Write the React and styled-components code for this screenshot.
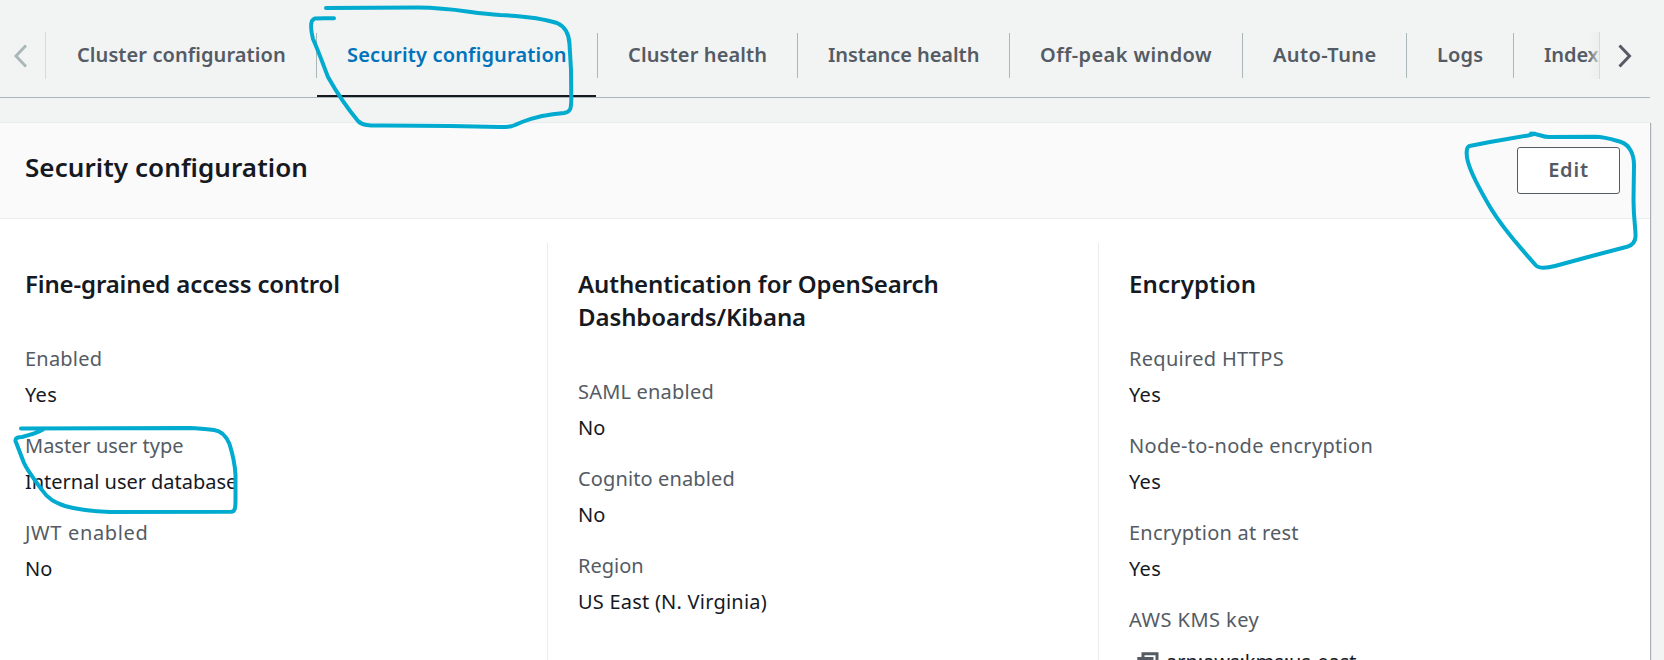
import React from "react";
import styled, { createGlobalStyle, css } from "styled-components";

const GlobalStyle = createGlobalStyle`
  * { box-sizing: border-box; }
  body {
    margin: 0;
    background: #f2f3f3;
    color: #16191f;
    font-family: "Noto Sans", "Open Sans", sans-serif;
    font-size: 20px;
  }
`;

const Page = styled.main`
  position: relative;
  display: flex;
  flex-direction: column;
  gap: 24px;
  width: 1664px;
  height: 660px;
  padding-right: 14px;
  overflow: hidden;
`;

const TabBar = styled.nav`
  display: flex;
  flex: none;
  height: 98px;
  border-bottom: 1px solid #aab7b8;
`;

const ScrollButton = styled.button`
  position: relative;
  flex: none;
  display: flex;
  align-items: center;
  height: 47px;
  margin: 32px 0 0;
  padding: 0;
  border: 0 solid #d5dbdb;
  background: #f2f3f3;
  ${(p) =>
    p.$side === "left"
      ? css`
          width: 46px;
          padding-left: 13px;
          border-right-width: 1px;
          color: #aab7b8;
        `
      : css`
          width: 51px;
          padding-left: 18px;
          border-left-width: 1px;
          color: #545b64;
          &::before {
            content: "";
            position: absolute;
            top: 0;
            bottom: 0;
            left: -12px;
            width: 11px;
            background: linear-gradient(to right, rgba(242, 243, 243, 0), rgba(236, 238, 238, 0.8));
          }
        `}
`;

const TabList = styled.div`
  display: flex;
  flex: 1;
  min-width: 0;
  overflow: hidden;
`;

const Tab = styled.div`
  flex: none;
  width: ${(p) => p.$width}px;
  padding-top: 33px;
  color: ${(p) => (p.$active ? "#0073bb" : "#545b64")};
  ${(p) =>
    p.$active &&
    css`
      background: linear-gradient(#16191f, #16191f) 1px 95px / 279px 2px no-repeat;
    `}
`;

const TabLabel = styled.div`
  height: 45px;
  padding-left: 30px;
  border-left: 1px solid ${(p) => (p.$first ? "transparent" : "#aab7b8")};
  font-weight: 600;
  line-height: 43px;
  letter-spacing: ${(p) => p.$tracking}px;
  white-space: nowrap;
`;

const Panel = styled.section`
  flex: 1;
  display: flex;
  flex-direction: column;
  margin-bottom: -10px;
  border-top: 1px solid #eaeded;
  background: #fff;
  box-shadow: 1px 1px 1px 0 rgba(0, 28, 36, 0.3);
`;

const PanelHeader = styled.header`
  display: flex;
  justify-content: space-between;
  align-items: flex-start;
  height: 96px;
  padding: 24px 30px 0 25px;
  border-bottom: 1px solid #eaeded;
  background: #fafafa;
`;

const PanelTitle = styled.h2`
  margin: 2px 0 0;
  font-size: 26px;
  font-weight: 600;
  line-height: 36px;
  letter-spacing: 0.07px;
`;

const EditButton = styled.button`
  width: 103px;
  height: 47px;
  padding: 0 0 1px;
  border: 1px solid #545b64;
  border-radius: 3px;
  background: #fff;
  color: #545b64;
  font: 600 20px/44px "Noto Sans", "Open Sans", sans-serif;
  letter-spacing: 0.8px;
`;

const Columns = styled.div`
  display: grid;
  grid-template-columns: 547px 551px 1fr;
  flex: 1;
  padding-top: 24px;
`;

const Column = styled.div`
  padding: 24px 24px 0 ${(p) => (p.$divided ? 30 : 25)}px;
  border-left: ${(p) => (p.$divided ? "1px solid #eaeded" : "0")};
`;

const ColumnTitle = styled.h3`
  margin: 0 0 41px;
  font-size: 24px;
  font-weight: 600;
  line-height: 33px;
  letter-spacing: ${(p) => p.$tracking}px;
  white-space: pre-line;
`;

const Field = styled.div`
  margin-bottom: 15px;
  line-height: 36px;
  white-space: nowrap;
`;

const FieldLabel = styled.div`
  color: #545b64;
  letter-spacing: ${(p) => p.$tracking}px;
`;

const FieldValue = styled.div`
  letter-spacing: ${(p) => p.$tracking}px;
`;

const KeyValue = styled.div`
  display: flex;
  align-items: flex-start;
  gap: 7px;
  padding: 6px 0 0 8px;

  svg {
    margin-top: 8px;
  }
`;

const Annotations = styled.svg`
  position: absolute;
  inset: 0;
  pointer-events: none;
`;

const tabs = [
  { label: "Cluster configuration", width: 270, tracking: 0.08 },
  { label: "Security configuration", width: 281, tracking: 0.15, active: true },
  { label: "Cluster health", width: 200, tracking: 0.13 },
  { label: "Instance health", width: 212, tracking: -0.06 },
  { label: "Off-peak window", width: 233, tracking: 0.4 },
  { label: "Auto-Tune", width: 164, tracking: 0.42 },
  { label: "Logs", width: 107, tracking: 0.15 },
  { label: "Indexes", width: 140, tracking: -0.1 },
];

const columns = [
  {
    title: "Fine-grained access control",
    tracking: -0.14,
    fields: [
      ["Enabled", 0.2, "Yes", 0.3],
      ["Master user type", 0, "Internal user database", -0.03],
      ["JWT enabled", 0.65, "No", 0],
    ],
  },
  {
    title: "Authentication for OpenSearch\nDashboards/Kibana",
    tracking: -0.1,
    fields: [
      ["SAML enabled", 0.2, "No", 0],
      ["Cognito enabled", 0.13, "No", 0],
      ["Region", 0, "US East (N. Virginia)", 0.22],
    ],
  },
  {
    title: "Encryption",
    tracking: 0.12,
    fields: [
      ["Required HTTPS", 0.3, "Yes", 0.3],
      ["Node-to-node encryption", 0.3, "Yes", 0.3],
      ["Encryption at rest", 0.24, "Yes", 0.3],
    ],
    keyLabel: "AWS KMS key",
    keyValue: "arn:aws:kms:us-east",
  },
];

function Chevron({ direction }) {
  return (
    <svg width="14" height="24" viewBox="0 0 14 24" fill="none" stroke="currentColor" strokeWidth="3">
      <path d={direction === "left" ? "M13 1.5 L3 12 L13 22.5" : "M1.5 1.5 L11.5 12 L1.5 22.5"} />
    </svg>
  );
}

function CopyIcon() {
  return (
    <svg width="22" height="22" viewBox="0 0 22 22" fill="none" stroke="#545b64" strokeWidth="3">
      <path d="M6 6 V1.8 H20 V16 H16" />
      <path d="M1.8 6.5 H15 V20.4 H1.8 Z" />
    </svg>
  );
}

export default function App() {
  return (
    <Page>
      <GlobalStyle />
      <TabBar>
        <ScrollButton $side="left" aria-label="Previous tabs">
          <Chevron direction="left" />
        </ScrollButton>
        <TabList>
          {tabs.map((tab, i) => (
            <Tab key={tab.label} $width={tab.width} $active={tab.active}>
              <TabLabel $first={i === 0} $tracking={tab.tracking}>{tab.label}</TabLabel>
            </Tab>
          ))}
        </TabList>
        <ScrollButton $side="right" aria-label="Next tabs">
          <Chevron direction="right" />
        </ScrollButton>
      </TabBar>

      <Panel>
        <PanelHeader>
          <PanelTitle>Security configuration</PanelTitle>
          <EditButton>Edit</EditButton>
        </PanelHeader>
        <Columns>
          {columns.map((column, i) => (
            <Column key={column.title} $divided={i > 0}>
              <ColumnTitle $tracking={column.tracking}>{column.title}</ColumnTitle>
              {column.fields.map(([label, labelTracking, value, valueTracking]) => (
                <Field key={label}>
                  <FieldLabel $tracking={labelTracking}>{label}</FieldLabel>
                  <FieldValue $tracking={valueTracking}>{value}</FieldValue>
                </Field>
              ))}
              {column.keyLabel && (
                <Field>
                  <FieldLabel $tracking={0.45}>{column.keyLabel}</FieldLabel>
                  <KeyValue>
                    <CopyIcon />
                    <FieldValue $tracking={-0.03}>{column.keyValue}</FieldValue>
                  </KeyValue>
                </Field>
              )}
            </Column>
          ))}
        </Columns>
      </Panel>

      <Annotations
        width="1664"
        height="660"
        viewBox="0 0 1664 660"
        fill="none"
        stroke="#00abcf"
        strokeWidth="4"
        strokeLinecap="round"
        strokeLinejoin="round"
      >
        <path d="M326 8 L418 7.6 C455 8 470 13 500 15 C525 16 545 19 557 23 C566 27 569 34 569.5 44 L571 70 L571.3 100 C571 108 571 112 564 113 C550 114 535 117 522 122 C513 126 512 127 500 127 L450 126 L385 125.5 C370 125.5 363 126 358 121 C348 109 337 93 328 77 C323 64 318 50 313 39 C311 31 309 20 315 18.5 Q320 18 334 18.3" />
        <path d="M1531 133.5 C1538 133.5 1542 137 1549 137 L1595 136.8 C1606 137 1614 140 1621 142 C1630 145 1634 155 1634 165 L1633.5 200 C1633.5 220 1636 230 1635.5 237 C1635 243 1632 245 1628 246.5 L1590 256.5 L1555 266 C1547 268 1539 269 1535.5 265 C1521 248 1505 232 1490 207 C1480 190 1471 173 1468 162 C1466 155 1466 147 1469.5 146 L1490 142 L1528 135.5 L1535 133.8" />
        <path d="M21 428.5 L190 428 Q200 428.5 214 430 C223 431 227 438 229.5 444 C232 452 235 465 235.5 475 L235.5 500 C235.5 508 235 511.5 231 511.8 L110 512 C92 511.5 75 509 65 506 C55 502.5 48 499 42 490 C34 479 27 470 24 463 L15.5 441 C15 438 18 437 22 437 C30 435 37 433 43 429.5" />
      </Annotations>
    </Page>
  );
}
